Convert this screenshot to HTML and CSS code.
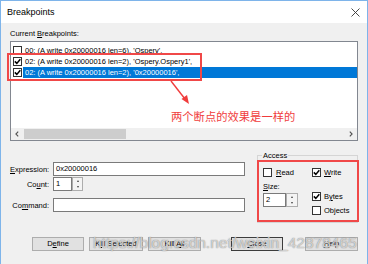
FILE: index.html
```html
<!DOCTYPE html>
<html>
<head>
<meta charset="utf-8">
<link rel="stylesheet" href="styles.css">
</head>
<body>
<div class="window">
  <div class="titlebar">
    <span class="title">Breakpoints</span>
    <svg class="close" viewBox="0 0 9 9"><path d="M0.5 0.5 L8.5 8.5 M8.5 0.5 L0.5 8.5" stroke="#333" stroke-width="0.9" fill="none"/></svg>
  </div>
  <div class="content">
    <div class="lbl">Current <u>B</u>reakpoints:</div>
    <div class="listbox">
      <div class="rows">
        <div class="row"><span class="cb"></span><span class="txt">00: (A write 0x20000016 len=6), 'Ospery',</span></div>
        <div class="row"><span class="cb"><svg viewBox="0 0 7 7"><path d="M0.8 3.4 L2.8 5.4 L6.3 1.2" stroke="#000" stroke-width="1.5" fill="none"/></svg></span><span class="txt">02: (A write 0x20000016 len=2), 'Ospery.Ospery1',</span></div>
        <div class="row sel"><span class="cb"><svg viewBox="0 0 7 7"><path d="M0.8 3.4 L2.8 5.4 L6.3 1.2" stroke="#000" stroke-width="1.5" fill="none"/></svg></span><span class="txt">02: (A write 0x20000016 len=2), '0x20000016',</span></div>
      </div>
      <div class="hscroll">
        <span class="arrow"><svg viewBox="0 0 4 6"><path d="M3.2 0.6 L0.9 3 L3.2 5.4" stroke="#505050" stroke-width="1.1" fill="none"/></svg></span>
        <span class="thumb"></span>
        <span class="spacer"></span>
        <span class="arrow"><svg viewBox="0 0 4 6"><path d="M0.8 0.6 L3.1 3 L0.8 5.4" stroke="#505050" stroke-width="1.1" fill="none"/></svg></span>
      </div>
    </div>
    <div class="lower">
      <div class="fields">
        <div class="field"><label><u>E</u>xpression:</label><div class="input wide">0x20000016</div></div>
        <div class="field count"><label>Co<u>u</u>nt:</label><div class="spinner"><div class="input small">1</div><div class="spin"><span class="up"></span><span class="down"></span></div></div></div>
        <div class="field cmd"><label>Co<u>m</u>mand:</label><div class="input wide"></div></div>
      </div>
      <fieldset class="access">
        <legend>Access</legend>
        <div class="agrid">
          <div class="col1">
            <div class="chk"><span class="cb"></span><span class="cl"><u>R</u>ead</span></div>
            <div class="sizelbl"><u>S</u>ize:</div>
            <div class="spinner"><div class="input size">2</div><div class="spin"><span class="up"></span><span class="down"></span></div></div>
          </div>
          <div class="col2">
            <div class="chk"><span class="cb"><svg viewBox="0 0 7 7"><path d="M0.8 3.4 L2.8 5.4 L6.3 1.2" stroke="#000" stroke-width="1.5" fill="none"/></svg></span><span class="cl"><u>W</u>rite</span></div>
            <div class="chk bytes"><span class="cb"><svg viewBox="0 0 7 7"><path d="M0.8 3.4 L2.8 5.4 L6.3 1.2" stroke="#000" stroke-width="1.5" fill="none"/></svg></span><span class="cl">B<u>y</u>tes</span></div>
            <div class="chk objects"><span class="cb"></span><span class="cl">Objects</span></div>
          </div>
        </div>
      </fieldset>
    </div>
    <div class="buttons">
      <div class="btn b-define">D<u>e</u>fine</div>
      <div class="btn b-killsel">K<u>i</u>ll Selected</div>
      <div class="btn b-killall">Kill <u>A</u>ll</div>
      <div class="btn b-close"><u>C</u>lose</div>
      <div class="btn b-help"><u>H</u>elp</div>
    </div>
  </div>

  <div class="redbox rb1"></div>
  <div class="redbox rb2"></div>
  <svg class="arrowsvg" viewBox="0 0 30 30"><path d="M5 3 L19 21" stroke="#f03c3c" stroke-width="1.4" fill="none"/><polygon points="23,26 15.5,21 21,17" fill="#f03c3c"/></svg>
  <div class="note">两个断点的效果是一样的</div>
  <div class="watermark">https://blog.csdn.net/weixin_42878465</div>
</div>
</body>
</html>
```

FILE: styles.css
```css
* { box-sizing: border-box; }
html, body { margin: 0; padding: 0; }
body {
  width: 368px; height: 264px; overflow: hidden;
  font-family: "Liberation Sans", Arial, sans-serif;
  font-size: 7.5px; line-height: 9px; color: #000; background: #fff;
}
.window {
  position: relative; width: 368px; height: 264px;
  border: 1px solid #7eb4ea; border-bottom: none;
  display: flex; flex-direction: column;
}
.titlebar {
  height: 22px; flex: none; background: #fff;
  display: flex; align-items: center; justify-content: space-between;
  padding: 0 7px 0 6px;
}
.title { font-size: 9px; line-height: 12px; }
.close { width: 9px; height: 9px; }
.content { flex: 1; background: #f0f0f0; padding: 6px 9px 0 9px; }
.lbl { height: 9px; }
.listbox {
  margin-top: 3px; height: 100px; border: 1px solid #828790; background: #fff;
  display: flex; flex-direction: column;
}
.rows { flex: 1; padding: 3px 0 0 2px; }
.row { display: flex; align-items: center; height: 11px; }
.cb {
  width: 9px; height: 9px; flex: none; border: 1px solid #333; background: #fff;
  display: flex; align-items: center; justify-content: center;
}
.cb svg { width: 7px; height: 7px; display: block; }
.row .txt { margin-left: 1px; padding-left: 2px; flex: 1; height: 11px; line-height: 11px; white-space: nowrap; }
.row.sel .txt { background: #0078d7; color: #fff; }
.hscroll { height: 12px; flex: none; background: #f0f0f0; display: flex; align-items: center; }
.hscroll .arrow { width: 12px; height: 12px; display: flex; align-items: center; justify-content: center; }
.hscroll .arrow svg { width: 4px; height: 6px; }
.hscroll .thumb { margin-left: 1px; width: 102px; height: 10px; background: #cdcdcd; }
.hscroll .spacer { flex: 1; }

.lower { display: flex; margin-top: 10px; height: 72px; }
.fields { width: 236px; padding-top: 11px; }
.field { display: flex; align-items: center; height: 14px; }
.field label { width: 40px; text-align: right; padding-right: 1px; margin-right: 3px; }
.field.count { margin-top: 1px; }
.field.cmd { margin-top: 7px; }
.input { height: 14px; border: 1px solid #7a7a7a; background: #fff; padding-left: 2px; line-height: 12px; }
.input.wide { width: 192px; }
.input.small { width: 19px; }
.input.size { width: 23px; }
.spinner { display: flex; }
.spin {
  width: 11px; height: 14px; border: 1px solid #adadad; background: #f4f4f4;
  display: flex; flex-direction: column; align-items: center; justify-content: space-around;
}
.spinner .size + .spin { width: 12px; }
.spin span { width: 0; height: 0; border-left: 1.5px solid transparent; border-right: 1.5px solid transparent; }
.spin .up { border-bottom: 2px solid #404040; }
.spin .down { border-top: 2px solid #404040; }

.access {
  flex: 1; margin: 0 0 0 11px; padding: 0 5px; min-width: 0;
  border: 1px solid #d5d5d5;
}
.access legend { padding: 0 1px; margin-left: -1px; font-size: 7.5px; line-height: 9px; }
.agrid { display: flex; padding-top: 8px; }
.col1 { width: 49px; }
.chk { display: flex; align-items: center; height: 9px; }
.col1 .cl { margin-left: 4px; }
.col2 .cl { margin-left: 3px; }
.sizelbl { margin-top: 5px; height: 9px; }
.col1 .spinner { margin-top: 2px; }
.chk.bytes { margin-top: 15px; }
.chk.objects { margin-top: 5px; }

.buttons { display: flex; margin-top: 14px; padding-left: 22px; }
.btn {
  height: 14px; border: 1px solid #adadad; background: #e1e1e1;
  text-align: center; line-height: 12px; white-space: nowrap;
}
.b-define { width: 52px; }
.b-killsel { width: 54px; margin-left: 5px; }
.b-killall { width: 53px; margin-left: 5px; }
.b-close { width: 52px; margin-left: 30px; border-color: #3c3c3c; }
.b-help { width: 53px; margin-left: 22px; }

.redbox { position: absolute; border: 2px solid #f04848; }
.rb1 { left: 6px; top: 52px; width: 195px; height: 28px; }
.rb2 { left: 256px; top: 159px; width: 102px; height: 62px; }
.arrowsvg { position: absolute; left: 165px; top: 77px; width: 30px; height: 30px; }
.note {
  position: absolute; left: 170px; top: 108px;
  font-family: "Noto Sans CJK SC", sans-serif; font-size: 11.3px; line-height: 14px;
  color: #f03c3c; white-space: nowrap;
}
.watermark {
  position: absolute; left: 92px; top: 232px;
  font-family: "Liberation Sans", Arial, sans-serif; font-size: 15.5px; line-height: 20px;
  color: rgba(255,255,255,0.6); white-space: nowrap;
  text-shadow: 0 0 1px rgba(110,110,110,0.7), 0 0 1px rgba(110,110,110,0.5);
}
```
